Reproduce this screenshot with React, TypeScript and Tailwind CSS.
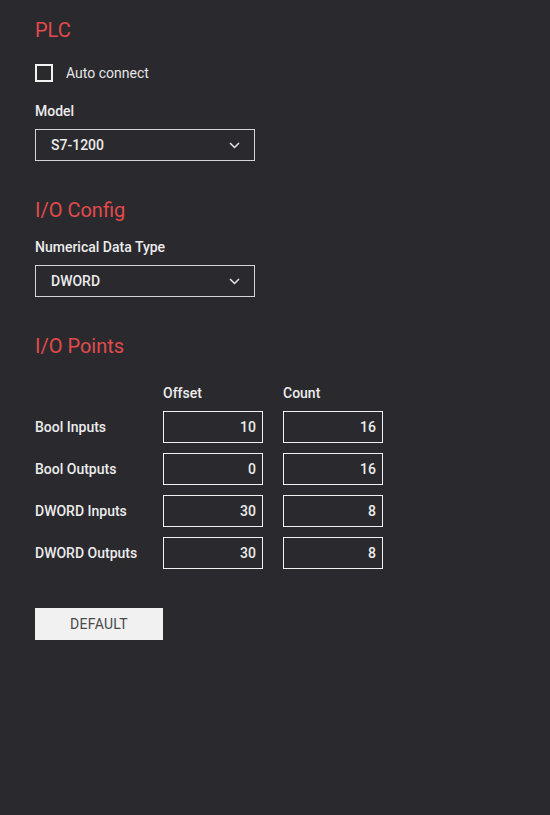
const rows = [
  { label: "Bool Inputs", offset: "10", count: "16" },
  { label: "Bool Outputs", offset: "0", count: "16" },
  { label: "DWORD Inputs", offset: "30", count: "8" },
  { label: "DWORD Outputs", offset: "30", count: "8" },
];

function Select({ value }: { value: string }) {
  return (
    <div className="flex h-[32px] w-[220px] items-center justify-between border border-[#d4d4d6] pl-[15px] pr-[14px] text-[14px] font-medium text-[#ececec]">
      <span>{value}</span>
      <svg width="11" height="7" viewBox="0 0 11 7" fill="none">
        <path d="M1 1l4.5 4.5L10 1" stroke="#e6e6e6" strokeWidth="1.5" />
      </svg>
    </div>
  );
}

function Heading({ children, className }: { children: string; className?: string }) {
  return <h2 className={`text-[20px] leading-[24px] text-[#e14b4b] ${className ?? ""}`}>{children}</h2>;
}

function Field({ value }: { value: string }) {
  return (
    <div className="flex h-[32px] w-[100px] items-center justify-end border border-[#f2f2f2] pr-[6px]">{value}</div>
  );
}

export default function App() {
  return (
    <div className="min-h-[815px] w-full bg-[#2a292e] font-['Roboto',sans-serif]">
      <div className="flex flex-col items-start px-[35px] pt-[18px]">
        {/* PLC */}
        <Heading>PLC</Heading>
        <label className="mt-[22px] flex items-center gap-[13px]">
          <span className="h-[18px] w-[18px] border-2 border-[#f2f2f2]" />
          <span className="text-[14px] leading-[18px] text-[#e6e6e6]">Auto connect</span>
        </label>
        <div className="mt-[21px] text-[14px] font-medium leading-[16px] text-[#ececec]">Model</div>
        <div className="mt-[10px]">
          <Select value="S7-1200" />
        </div>

        {/* I/O Config */}
        <Heading className="mt-[37px]">I/O Config</Heading>
        <div className="mt-[17px] text-[14px] font-medium leading-[16px] text-[#ececec]">Numerical Data Type</div>
        <div className="mt-[10px]">
          <Select value="DWORD" />
        </div>

        {/* I/O Points */}
        <Heading className="mt-[37px]">I/O Points</Heading>
        <div className="mt-[27px] flex flex-col gap-[10px] text-[14px] font-medium text-[#ececec]">
          <div className="flex leading-[16px]">
            <div className="w-[128px]" />
            <div className="w-[120px]">Offset</div>
            <div className="w-[100px]">Count</div>
          </div>
          {rows.map((r) => (
            <div key={r.label} className="flex items-center gap-[20px]">
              <div className="w-[108px]">{r.label}</div>
              <Field value={r.offset} />
              <Field value={r.count} />
            </div>
          ))}
        </div>

        <button className="mt-[39px] h-[32px] w-[128px] bg-[#f0f1f0] text-[14px] tracking-[0.3px] text-[#4a4a4a]">
          DEFAULT
        </button>
      </div>
    </div>
  );
}
